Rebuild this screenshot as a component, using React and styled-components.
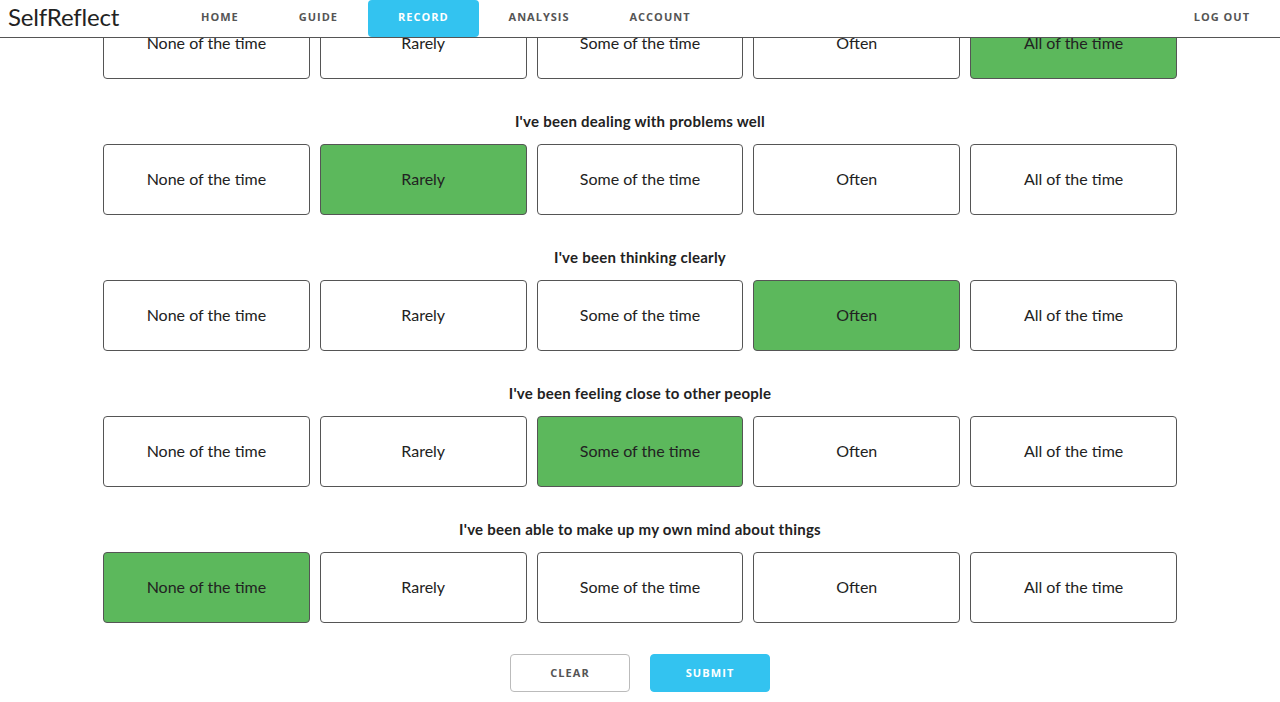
import React, { useState } from 'react';
import styled, { createGlobalStyle } from 'styled-components';

const GlobalStyle = createGlobalStyle`
  html, body {
    margin: 0;
    padding: 0;
    background: #fff;
    font-family: Lato, 'Open Sans', 'Liberation Sans', sans-serif;
    color: #222;
    overflow: hidden;
  }
`;

const Header = styled.header`
  position: fixed;
  top: 0;
  left: 0;
  right: 0;
  height: 37px;
  display: flex;
  align-items: flex-start;
  background: #fff;
  border-bottom: 1px solid #555;
  z-index: 10;
`;

const Logo = styled.div`
  font-size: 24px;
  line-height: 34px;
  color: #222;
  padding-left: 8px;
  width: 163px;
  letter-spacing: -0.2px;
`;

const Nav = styled.nav`
  display: flex;
  align-items: flex-start;
  height: 100%;
  flex: 1;
`;

const NavItem = styled.a`
  display: flex;
  align-items: center;
  justify-content: center;
  height: 37px;
  padding: 0 30px 5px;
  box-sizing: border-box;
  font-family: 'Open Sans', Lato, sans-serif;
  font-size: 11px;
  font-weight: 700;
  letter-spacing: 1px;
  text-transform: uppercase;
  color: ${p => (p.$active ? '#fff' : '#555')};
  background: ${p => (p.$active ? '#33c3f0' : 'transparent')};
  border-radius: 4px;
  margin-left: ${p => (p.$right ? 'auto' : '0')};
  cursor: pointer;
`;

const Main = styled.main`
  width: 1074px;
  margin: 0 auto;
  /* page is scrolled down a little */
  margin-top: -57px;
`;

const Question = styled.section`
  display: flex;
  flex-direction: column;
`;

const Label = styled.h4`
  margin: 0;
  padding: 31px 0 12px;
  height: 22px;
  line-height: 22px;
  font-size: 15px;
  font-weight: 700;
  letter-spacing: 0.25px;
  text-align: center;
  color: #222;
`;

const Options = styled.div`
  display: grid;
  grid-template-columns: repeat(5, 1fr);
  gap: 10px;
`;

const Option = styled.button`
  height: 71px;
  border: 1px solid #555;
  border-radius: 4px;
  background: ${p => (p.$selected ? '#5cb85c' : '#fff')};
  font-family: Lato, 'Open Sans', sans-serif;
  font-size: 16px;
  color: #222;
  cursor: pointer;
  padding: 0 0 2px;
`;

const Actions = styled.div`
  display: flex;
  justify-content: center;
  gap: 20px;
  margin-top: 31px;
`;

const ActionButton = styled.button`
  width: 120px;
  height: 38px;
  border-radius: 4px;
  border: 1px solid ${p => (p.$primary ? '#33c3f0' : '#bbb')};
  background: ${p => (p.$primary ? '#33c3f0' : '#fff')};
  color: ${p => (p.$primary ? '#fff' : '#555')};
  font-family: 'Open Sans', Lato, sans-serif;
  font-size: 11px;
  font-weight: 700;
  letter-spacing: 1.1px;
  text-transform: uppercase;
  cursor: pointer;
  padding: 0 0 2px;
`;

const choices = ['None of the time', 'Rarely', 'Some of the time', 'Often', 'All of the time'];

// first question's label sits under the header (page is scrolled)
const initial = [
  { q: '', a: 4 },
  { q: "I've been dealing with problems well", a: 1 },
  { q: "I've been thinking clearly", a: 3 },
  { q: "I've been feeling close to other people", a: 2 },
  { q: "I've been able to make up my own mind about things", a: 0 },
];

export default function App() {
  const [answers, setAnswers] = useState(initial);

  const pick = (qi, ci) => {
    setAnswers(answers.map((x, i) => (i === qi ? { ...x, a: ci } : x)));
  };

  return (
    <>
      <GlobalStyle />
      <Header>
        <Logo>SelfReflect</Logo>
        <Nav>
          <NavItem>Home</NavItem>
          <NavItem>Guide</NavItem>
          <NavItem $active>Record</NavItem>
          <NavItem>Analysis</NavItem>
          <NavItem>Account</NavItem>
          <NavItem $right>Log out</NavItem>
        </Nav>
      </Header>
      <Main>
        {answers.map((item, qi) => (
          <Question key={qi}>
            <Label>{item.q}</Label>
            <Options>
              {choices.map((c, ci) => (
                <Option key={c} $selected={item.a === ci} onClick={() => pick(qi, ci)}>
                  {c}
                </Option>
              ))}
            </Options>
          </Question>
        ))}
        <Actions>
          <ActionButton onClick={() => setAnswers(answers.map(x => ({ ...x, a: -1 })))}>Clear</ActionButton>
          <ActionButton $primary>Submit</ActionButton>
        </Actions>
      </Main>
    </>
  );
}
